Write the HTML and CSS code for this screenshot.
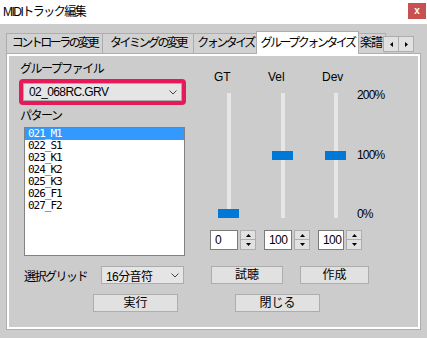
FILE: index.html
```html
<!DOCTYPE html>
<html>

<head>
    <title>MIDIトラック編集</title>
    <link rel="stylesheet" href="styles.css">
</head>

<body>

    <div class="titlebar">
        <span class="title">MIDIトラック編集</span>
        <button class="close-button" title="閉じる">x</button>
    </div>

    <!-- Tab strip -->
    <div class="tabs">
        <div class="tab">コントローラの変更</div>
        <div class="tab">タイミングの変更</div>
        <div class="tab">クォンタイズ</div>
        <div class="tab selected">グループクォンタイズ</div>
        <div class="tab">楽譜</div>
        <div class="tab-scroll">
            <button class="scroll-button">
                <svg viewBox="0 0 3 5"><path d="M3 0v5L0 2.5z" /></svg>
            </button>
            <button class="scroll-button">
                <svg viewBox="0 0 3 5"><path d="M0 0v5l3-2.5z" /></svg>
            </button>
        </div>
    </div>

    <div class="panel">
        <div class="page">
            <div class="main">

                <div class="left">
                    <div class="label">グループファイル</div>
                    <div class="highlight">
                        <div class="combo">
                            <span class="combo-text">02_068RC.GRV</span>
                            <svg class="chevron" viewBox="0 0 8 5"><polyline points="0.5,0.5 4,4 7.5,0.5" /></svg>
                        </div>
                    </div>
                    <div class="label">パターン</div>
                    <ul class="listbox">
                        <li class="active">021_M1</li>
                        <li>022_S1</li>
                        <li>023_K1</li>
                        <li>024_K2</li>
                        <li>025_K3</li>
                        <li>026_F1</li>
                        <li>027_F2</li>
                    </ul>
                </div>

                <!-- GT / Vel / Dev sliders -->
                <div class="sliders">
                    <div class="slider-col">
                        <div class="slider-label">GT</div>
                        <div class="track"><div class="thumb" style="top: 116px"></div></div>
                        <div class="spin">
                            <div class="spin-edit">0</div>
                            <div class="spin-buttons">
                                <button class="spin-button"><svg viewBox="0 0 5 3"><path d="M0 3h5L2.5 0z" /></svg></button>
                                <button class="spin-button"><svg viewBox="0 0 5 3"><path d="M0 0h5L2.5 3z" /></svg></button>
                            </div>
                        </div>
                    </div>
                    <div class="slider-col">
                        <div class="slider-label">Vel</div>
                        <div class="track"><div class="thumb" style="top: 58px"></div></div>
                        <div class="spin">
                            <div class="spin-edit">100</div>
                            <div class="spin-buttons">
                                <button class="spin-button"><svg viewBox="0 0 5 3"><path d="M0 3h5L2.5 0z" /></svg></button>
                                <button class="spin-button"><svg viewBox="0 0 5 3"><path d="M0 0h5L2.5 3z" /></svg></button>
                            </div>
                        </div>
                    </div>
                    <div class="slider-col narrow">
                        <div class="slider-label">Dev</div>
                        <div class="track"><div class="thumb" style="top: 58px"></div></div>
                        <div class="spin">
                            <div class="spin-edit">100</div>
                            <div class="spin-buttons">
                                <button class="spin-button"><svg viewBox="0 0 5 3"><path d="M0 3h5L2.5 0z" /></svg></button>
                                <button class="spin-button"><svg viewBox="0 0 5 3"><path d="M0 0h5L2.5 3z" /></svg></button>
                            </div>
                        </div>
                    </div>
                    <div class="scale">
                        <span>200%</span>
                        <span>100%</span>
                        <span>0%</span>
                    </div>
                </div>

            </div>

            <div class="row grid-row">
                <span class="row-label">選択グリッド</span>
                <div class="combo small">
                    <span class="combo-text">16分音符</span>
                    <svg class="chevron" viewBox="0 0 8 5"><polyline points="0.5,0.5 4,4 7.5,0.5" /></svg>
                </div>
                <button class="button listen">試聴</button>
                <button class="button create">作成</button>
            </div>

            <div class="row action-row">
                <button class="button wide">実行</button>
                <button class="button wide">閉じる</button>
            </div>
        </div>
    </div>

</body>

</html>
```

FILE: styles.css
```css
* {
    box-sizing: border-box;
}

body {
    font-family: "Liberation Sans", "Noto Sans CJK JP", sans-serif;
    font-size: 12px;
    margin: 0;
    width: 427px;
    height: 338px;
    overflow: hidden;
    background-color: #cccccc;
    color: #000;
}

button {
    font-family: inherit;
    font-size: 12px;
    color: #000;
    padding: 0;
}

.titlebar {
    display: flex;
    align-items: center;
    justify-content: space-between;
    height: 24px;
    padding: 0 1px 0 3px;
    background-color: #ffffff;
}

.title {
    letter-spacing: -1.5px;
    line-height: 14px;
}

.close-button {
    width: 18px;
    height: 16px;
    margin-top: -2px;
    border: none;
    background-color: #c75050;
    color: #ffffff;
    font-size: 10px;
    font-weight: bold;
    line-height: 14px;
}

/* tabs */
.tabs {
    display: flex;
    align-items: flex-end;
    height: 22px;
    margin-top: 7px;
    padding-left: 6px;
    position: relative;
    z-index: 1;
}

.tab {
    height: 20px;
    line-height: 19px;
    margin-right: -1px;
    border: 1px solid #adadad;
    border-bottom: none;
    background-color: #d2d2d2;
    text-align: center;
    white-space: nowrap;
    letter-spacing: -2.5px;
}

.tab:nth-child(1) {
    width: 97px;
}

.tab:nth-child(2) {
    width: 92px;
}

.tab:nth-child(3) {
    width: 65px;
}

.tab:nth-child(5) {
    width: 29px;
    text-align: left;
    padding-left: 2px;
    letter-spacing: -1px;
}

.tab.selected {
    width: 103px;
    height: 23px;
    line-height: 22px;
    margin: 0 -2px -1px -1px;
    background-color: #ffffff;
    position: relative;
}

.tab-scroll {
    display: flex;
    margin-bottom: 1px;
    margin-left: -2px;
    position: relative;
}

.scroll-button {
    width: 16px;
    height: 16px;
    margin-right: -1px;
    border: 1px solid #adadad;
    background-color: #e1e1e1;
}

.scroll-button svg {
    width: 3px;
    height: 5px;
    display: block;
    margin: 0 auto;
}

/* tab page */
.panel {
    height: 277px;
    margin: 0 6px;
    border: 1px solid #adadad;
    padding: 2px;
    background-color: #ffffff;
}

.page {
    height: 100%;
    background-color: #cccccc;
    padding: 0 0 0 10px;
}

.main {
    display: flex;
}

.left {
    width: 167px;
    padding-top: 6px;
}

.label {
    line-height: 14px;
    letter-spacing: -1.5px;
    padding-left: 1px;
}

.highlight {
    margin: 3px 0 4px;
    border: 4px solid #e6195a;
    border-radius: 4px;
}

.combo {
    display: flex;
    align-items: center;
    justify-content: space-between;
    height: 18px;
    padding: 0 4px 0 5px;
    border: 1px solid #acacac;
    background-color: #e5e5e5;
}

.combo-text {
    letter-spacing: -0.6px;
}

.chevron {
    width: 8px;
    height: 5px;
    fill: none;
    stroke: #444;
    stroke-width: 1;
}

.listbox {
    list-style: none;
    margin: 4px 0 0 5px;
    padding: 0;
    width: 161px;
    height: 129px;
    border: 1px solid #828282;
    background-color: #ffffff;
    font-family: "DejaVu Sans Mono", monospace;
    font-size: 11px;
    letter-spacing: -1px;
}

.listbox li {
    height: 12px;
    line-height: 12px;
    padding-left: 3px;
}

.listbox li.active {
    background-color: #3399ff;
    color: #ffffff;
}

/* sliders */
.sliders {
    display: flex;
    margin-left: 16px;
    padding-top: 14px;
}

.slider-col {
    width: 54px;
    display: flex;
    flex-direction: column;
}

.slider-col.narrow {
    width: 52px;
}

.slider-label {
    line-height: 14px;
    padding-left: 12px;
}

.track {
    position: relative;
    width: 4px;
    height: 125px;
    margin: 9px auto 0;
    background-color: #e6e6e6;
}

.thumb {
    position: absolute;
    left: -9px;
    width: 21px;
    height: 9px;
    background-color: #0078d7;
}

.spin {
    display: flex;
    gap: 2px;
    margin: 12px 0 0 8px;
}

.spin-edit {
    width: 30px;
    height: 20px;
    line-height: 18px;
    padding-left: 4px;
    border: 1px solid #7a7a7a;
    background-color: #ffffff;
    letter-spacing: -0.6px;
}

.spin-buttons {
    display: flex;
    flex-direction: column;
}

.spin-button {
    width: 16px;
    height: 10px;
    border: 1px solid #adadad;
    background-color: #e1e1e1;
}

.spin-button+.spin-button {
    border-top: none;
}

.spin-button svg {
    display: block;
    width: 5px;
    height: 3px;
    margin: 0 auto;
}

.scale {
    display: flex;
    flex-direction: column;
    justify-content: space-between;
    height: 133px;
    margin: 18px 0 0 -5px;
    line-height: 14px;
    letter-spacing: -0.8px;
}

/* bottom rows */
.row {
    display: flex;
    align-items: center;
    height: 18px;
    margin-top: 10px;
}

.grid-row {
    padding-left: 5px;
}

.row-label {
    width: 77px;
    letter-spacing: -1.5px;
}

.combo.small {
    width: 83px;
    padding-left: 4px;
}

.button {
    height: 18px;
    border: 1px solid #adadad;
    background-color: #e1e1e1;
    line-height: 16px;
}

.listen {
    width: 72px;
    margin-left: 27px;
}

.create {
    width: 69px;
    margin-left: 17px;
}

.action-row {
    padding-left: 74px;
    gap: 57px;
}

.wide {
    width: 85px;
}
```
